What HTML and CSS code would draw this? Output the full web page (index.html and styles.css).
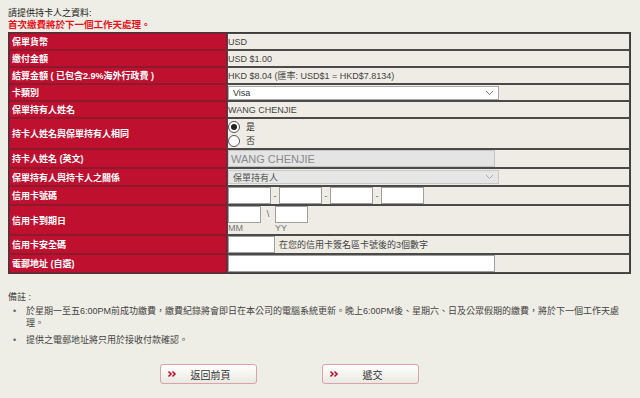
FILE: index.html
```html
<!DOCTYPE html>
<html lang="zh-Hant">
<head>
    <meta charset="UTF-8">
    <meta name="viewport" content="width=device-width, initial-scale=1.0">
    <title>信用卡繳費</title>
    <link rel="stylesheet" href="styles.css">
</head>
<body>
    <div class="intro">請提供持卡人之資料:</div>
    <div class="warn">首次繳費將於下一個工作天處理。</div>

    <table class="pay">
        <tr class="r17">
            <td class="label">保單貨幣</td>
            <td class="value">USD</td>
        </tr>
        <tr class="r17">
            <td class="label">繳付金額</td>
            <td class="value">USD $1.00</td>
        </tr>
        <tr class="r17">
            <td class="label">結算金額 ( 已包含2.9%海外行政費 )</td>
            <td class="value">HKD $8.04 (匯率: USD$1 = HKD$7.8134)</td>
        </tr>
        <tr class="r17">
            <td class="label">卡類別</td>
            <td class="value">
                <div class="select">
                    <span>Visa</span>
                    <svg width="9" height="6" viewBox="0 0 9 6"><path d="M1 1l3.5 3.5L8 1" fill="none" stroke="#777" stroke-width="1"/></svg>
                </div>
            </td>
        </tr>
        <tr class="r17">
            <td class="label">保單持有人姓名</td>
            <td class="value">WANG CHENJIE</td>
        </tr>
        <tr class="r32">
            <td class="label">持卡人姓名與保單持有人相同</td>
            <td class="value">
                <label class="radio"><span class="dot on"></span>是</label>
                <label class="radio"><span class="dot"></span>否</label>
            </td>
        </tr>
        <tr class="r18">
            <td class="label">持卡人姓名 (英文)</td>
            <td class="value"><input class="field wide off" type="text" value="WANG CHENJIE" disabled></td>
        </tr>
        <tr class="r18">
            <td class="label">保單持有人與持卡人之關係</td>
            <td class="value">
                <div class="select off">
                    <span>保單持有人</span>
                    <svg width="9" height="6" viewBox="0 0 9 6"><path d="M1 1l3.5 3.5L8 1" fill="none" stroke="#aaa" stroke-width="1"/></svg>
                </div>
            </td>
        </tr>
        <tr class="r19">
            <td class="label">信用卡號碼</td>
            <td class="value">
                <div class="card">
                    <input class="field num" type="text">
                    <span class="sep">-</span>
                    <input class="field num" type="text">
                    <span class="sep">-</span>
                    <input class="field num" type="text">
                    <span class="sep">-</span>
                    <input class="field num" type="text">
                </div>
            </td>
        </tr>
        <tr class="r31">
            <td class="label">信用卡到期日</td>
            <td class="value">
                <div class="expiry">
                    <div class="part">
                        <input class="field mm" type="text">
                        <span>MM</span>
                    </div>
                    <span class="slash">\</span>
                    <div class="part">
                        <input class="field yy" type="text">
                        <span>YY</span>
                    </div>
                </div>
            </td>
        </tr>
        <tr class="r19">
            <td class="label">信用卡安全碼</td>
            <td class="value">
                <div class="cvv">
                    <input class="field code" type="text">
                    <span>在您的信用卡簽名區卡號後的3個數字</span>
                </div>
            </td>
        </tr>
        <tr class="r18">
            <td class="label">電郵地址 (自選)</td>
            <td class="value"><input class="field wide" type="text"></td>
        </tr>
    </table>

    <div class="notes">
        <div class="notes-title">備註 :</div>
        <ul>
            <li>於星期一至五6:00PM前成功繳費，繳費紀錄將會即日在本公司的電腦系統更新。晚上6:00PM後、星期六、日及公眾假期的繳費，將於下一個工作天處理。</li>
            <li>提供之電郵地址將只用於接收付款確認。</li>
        </ul>
    </div>

    <div class="actions">
        <button type="button" class="btn">
            <svg width="10" height="8" viewBox="0 0 10 8"><path d="M1.5 1.5l2.5 2.5-2.5 2.5M5.5 1.5l2.5 2.5-2.5 2.5" fill="none" stroke="#c3102f" stroke-width="1.6"/></svg>
            <span>返回前頁</span>
        </button>
        <button type="button" class="btn">
            <svg width="10" height="8" viewBox="0 0 10 8"><path d="M1.5 1.5l2.5 2.5-2.5 2.5M5.5 1.5l2.5 2.5-2.5 2.5" fill="none" stroke="#c3102f" stroke-width="1.6"/></svg>
            <span>遞交</span>
        </button>
    </div>
</body>
</html>
```

FILE: styles.css
```css
body {
    margin: 0;
    padding: 8px 8px 0 8px;
    background-color: #eeede6;
    color: #444;
    font-family: "Liberation Sans", Arial, "Noto Sans CJK TC", sans-serif;
    font-size: 9px;
}
.intro {
    color: #222;
    font-size: 9px;
    line-height: 11px;
}
.warn {
    color: #e8141c;
    font-weight: bold;
    font-size: 9.5px;
    line-height: 12px;
    margin-bottom: 1px;
}
.pay {
    width: 623px;
    border-collapse: separate;
    border-spacing: 0;
    border: 1px solid #3c3c3c;
}
.pay td {
    padding: 0 2px;
    border: 1px solid #4a4a4a;
    vertical-align: middle;
}
.pay .label {
    width: 212px;
    background-color: #bf1030;
    color: #fff;
    font-weight: bold;
    border-color: #8c1a2c;
}
.pay .value {
    background-color: #eeece5;
    padding-left: 0;
}
.r17 td { height: 15px; }
.r18 td { height: 16px; }
.r19 td { height: 17px; }
.r31 td { height: 28px; }
.r32 td { height: 29px; }

.select {
    width: 271px;
    height: 14px;
    box-sizing: border-box;
    border: 1px solid #a9a9a9;
    background: #fff;
    display: flex;
    align-items: center;
    justify-content: space-between;
    padding: 0 4px 0 4px;
    color: #333;
}
.select.off {
    background: #e6e6e6;
    border-color: #c8c8c8;
    color: #555;
}
.radio {
    display: flex;
    align-items: center;
    gap: 6px;
    height: 14px;
    color: #333;
}
.dot {
    width: 10px;
    height: 10px;
    border: 1px solid #555;
    border-radius: 50%;
    background: #fff;
    position: relative;
}
.dot.on::after {
    content: "";
    position: absolute;
    left: 2px;
    top: 2px;
    width: 6px;
    height: 6px;
    border-radius: 50%;
    background: #222;
}
.field {
    box-sizing: border-box;
    margin: 0;
    height: 17px;
    border: 1px solid #a0a0a0;
    background: #fff;
    padding: 0 2px;
    font-family: "Liberation Sans", Arial, sans-serif;
    font-size: 11px;
    display: block;
}
.field.wide {
    width: 267px;
}
.field.off {
    background: #e4e4e4;
    border-color: #c4c4c4;
    color: #8a8a8a;
}
.card {
    display: flex;
    align-items: center;
}
.field.num {
    width: 43px;
}
.sep {
    width: 8px;
    text-align: center;
    color: #666;
}
.expiry {
    display: flex;
    align-items: flex-start;
}
.part {
    display: flex;
    flex-direction: column;
    color: #777;
    font-size: 9px;
    line-height: 11px;
}
.field.mm {
    width: 33px;
}
.field.yy {
    width: 33px;
}
.slash {
    width: 14px;
    text-align: center;
    color: #666;
    line-height: 17px;
}
.cvv {
    display: flex;
    align-items: center;
    gap: 4px;
}
.field.code {
    width: 47px;
}
.notes {
    margin-top: 17px;
    color: #444;
    font-size: 9px;
}
.notes-title {
    line-height: 12px;
}
.notes ul {
    margin: 2px 0 0 0;
    padding: 0 0 0 18px;
    list-style: none;
}
.notes li {
    position: relative;
    line-height: 12px;
    margin-bottom: 5px;
    padding-right: 2px;
}
.notes li::before {
    content: "•";
    position: absolute;
    left: -13px;
    color: #666;
}
.actions {
    display: flex;
    gap: 65px;
    padding-left: 152px;
    margin-top: 18px;
}
.btn {
    width: 97px;
    height: 20px;
    display: flex;
    align-items: center;
    padding: 0 0 0 6px;
    border: 1px solid #dba2ac;
    border-radius: 3px;
    background: linear-gradient(#ffffff, #e9e8e1);
    font-family: "Noto Sans CJK TC", sans-serif;
    font-size: 10px;
    color: #333;
    cursor: pointer;
}
.btn span {
    flex: 1;
    text-align: center;
    padding-right: 12px;
}
```
